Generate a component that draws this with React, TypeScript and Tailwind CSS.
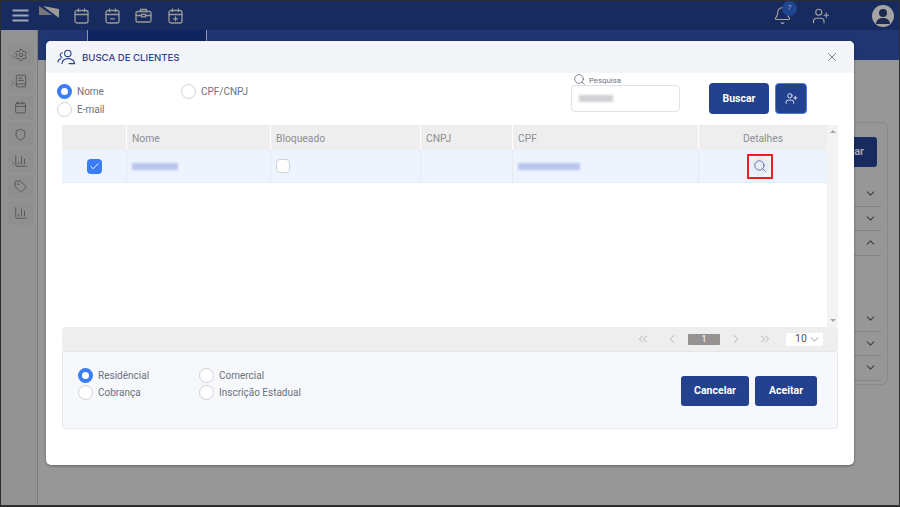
import { Bell, Calendar, Check, ChevronDown, ChevronLeft, ChevronRight, ChevronUp, ChevronsLeft, ChevronsRight, BookText, ChartColumn, Search, Settings, Shield, Tag, UserPlus, X } from "lucide-react";
import type { ReactNode } from "react";

function Radio({ label, on, h = "h-[17px]" }: { label: string; on?: boolean; h?: string }) {
  return (
    <div className={`flex items-center gap-[5px] ${h}`}>
      {on ? (
        <span className="w-[15px] h-[15px] rounded-full border-[4px] border-[#3b7cf5] bg-white shrink-0" />
      ) : (
        <span className="w-[15px] h-[15px] rounded-full border-[1.5px] border-[#ced2d8] bg-white shrink-0" />
      )}
      <span className="text-[10px] text-[#6b7280] whitespace-nowrap">{label}</span>
    </div>
  );
}

function Blur({ w, c = "#b9c5ee" }: { w: string; c?: string }) {
  return <span className={`block h-[7px] blur-[1px] ${w}`} style={{ backgroundColor: c }} />;
}

function Side({ children, arrow }: { children: ReactNode; arrow?: boolean }) {
  return (
    <div className="relative w-[26px] h-[24px] bg-[#8f8f8f] rounded-[2px] flex items-center justify-center text-[#474747]">
      {arrow && <ChevronRight size={6} strokeWidth={2} className="absolute left-[2px] top-[11px]" />}
      {children}
    </div>
  );
}

function CalIcon({ mark }: { mark?: "minus" | "plus" }) {
  return (
    <svg width="15" height="16" viewBox="0 0 15 16" fill="none" stroke="#9a9a94" strokeWidth="1.3" strokeLinecap="round">
      <rect x="1" y="2.5" width="13" height="12.5" rx="2" />
      <path d="M1 6.5H14M4.5 1V3.5M10.5 1V3.5" />
      {mark === "minus" && <path d="M5.5 10.8H9.5" />}
      {mark === "plus" && <path d="M5.5 10.8H9.5M7.5 8.8V12.8" />}
    </svg>
  );
}

function CaseIcon() {
  return (
    <svg width="17" height="15" viewBox="0 0 17 15" fill="none" stroke="#9a9a94" strokeWidth="1.3" strokeLinecap="round">
      <rect x="1" y="3.5" width="15" height="10.5" rx="1.5" />
      <path d="M5.5 3.5V1.5H11.5V3.5M1 7.5H6.5M10.5 7.5H16" />
      <rect x="6.5" y="6.3" width="4" height="2.5" />
    </svg>
  );
}

function PeopleIcon() {
  return (
    <svg width="19" height="16" viewBox="0 0 19 16" fill="none" stroke="#27408f" strokeWidth="1.1" strokeLinecap="round">
      <circle cx="10.8" cy="4.4" r="3.2" />
      <path d="M5 14.6C5 11.6 7.4 9.6 10.8 9.6C14.2 9.6 17.6 11.6 17.6 14.6H12" />
      <path d="M5.4 3.8C4 4 3 5.2 3.3 6.6C3.5 7.5 4.2 8.1 5 8.4M1 13C1 11.2 2.2 10 4 9.7" />
    </svg>
  );
}

function Head({ className, children }: { className: string; children?: ReactNode }) {
  return <div className={`flex items-center pt-[2px] border-r border-white h-full text-[10.3px] text-[#8b8f96] ${className}`}>{children}</div>;
}

function Cell({ className, children }: { className: string; children?: ReactNode }) {
  return <div className={`flex items-center border-r border-[#e4e9f2] h-full ${className}`}>{children}</div>;
}

function BgRow({ up }: { up?: boolean }) {
  return (
    <div className="h-[24.5px] border-b border-[#858585] flex items-center justify-end pr-[4px] text-[#404040]">
      {up ? <ChevronUp size={13} /> : <ChevronDown size={13} />}
    </div>
  );
}

const btn = "bg-[#23418f] text-white text-[10.5px] font-['Roboto',sans-serif] font-bold";

export default function App() {
  return (
    <div className="relative w-[900px] h-[507px] overflow-hidden bg-[#979797] border-t border-l border-b-2 border-r border-[#2e2e2e] font-['Roboto',sans-serif]">
      {/* Top bar */}
      <header className="h-[29px] bg-[#172b5f] flex items-center pl-[11px]">
        <svg width="17" height="13" viewBox="0 0 17 13" fill="none" stroke="#a0a8b8" strokeWidth="1.8">
          <path d="M0.5 1.5H16.5M0.5 6.5H16.5M0.5 11.5H16.5" />
        </svg>
        <svg width="20" height="12" viewBox="0 0 20 12" className="ml-[10px] -mt-[7px]">
          <polygon points="0,0 0,9 13,9" fill="#78787c" />
          <polygon points="4,0 20,3 20,12" fill="#9a9a98" />
        </svg>
        <div className="flex items-center ml-[15px]">
          <CalIcon />
          <span className="ml-[16px] flex"><CalIcon mark="minus" /></span>
          <span className="ml-[15px] flex"><CaseIcon /></span>
          <span className="ml-[16px] flex"><CalIcon mark="plus" /></span>
        </div>
        <div className="ml-auto flex items-center pr-[5px]">
          <div className="relative mr-[20px]">
            <Bell size={19} strokeWidth={1.4} className="text-[#a5a5a0]" />
            <span className="absolute -top-[5px] left-[9px] w-[15px] h-[15px] rounded-full bg-[#1f4490] text-[#9aa6c0] text-[7px] flex items-center justify-center">7</span>
          </div>
          <UserPlus size={18} strokeWidth={1.5} className="text-[#a5a5a0] mr-[42px]" />
          <span className="relative w-[22px] h-[22px] rounded-full bg-[#a4a4a4] overflow-hidden flex justify-center">
            <span className="absolute top-[4px] w-[8px] h-[8px] rounded-full bg-[#1d2a4f]" />
            <span className="absolute top-[13px] w-[14px] h-[6px] rounded-t-full bg-[#1d2a4f]" />
          </span>
        </div>
      </header>

      <div className="flex h-[475px]">
        {/* Sidebar */}
        <aside className="w-[37px] bg-[#939393] border-r border-[#7d7d7d] flex flex-col items-center gap-[2.4px] pt-[13px] pl-[3px] shrink-0">
          <Side arrow><Settings size={14} strokeWidth={1.3} /></Side>
          <Side arrow><BookText size={14} strokeWidth={1.3} /></Side>
          <Side><Calendar size={13} strokeWidth={1.4} /></Side>
          <Side><Shield size={13} strokeWidth={1.4} /></Side>
          <Side arrow><ChartColumn size={14} strokeWidth={1.3} /></Side>
          <Side><Tag size={13} strokeWidth={1.4} /></Side>
          <Side><ChartColumn size={14} strokeWidth={1.3} /></Side>
        </aside>

        {/* Dimmed page */}
        <main className="flex-1 min-w-0">
          <div className="h-[30px] bg-[#1f3672] flex pl-[49px]">
            <div className="w-[120px] h-full bg-[#0f2560] border-x border-[#8d97b0]" />
          </div>
          <div className="flex justify-end pt-[62px] pr-[11px]">
            <div className="w-[160px] h-[263px] border border-[#8b8b8b] rounded-[6px] pt-[14px] pr-[6px]">
              <div className="flex justify-end pr-[4px]">
                <span className="w-[60px] h-[30px] bg-[#172b5f] rounded-[3px] text-[#a8abb3] text-[11px] font-semibold flex items-center justify-end pr-[13px]">ar</span>
              </div>
              <div className="mt-[15px] flex flex-col">
                <BgRow />
                <BgRow />
                <BgRow up />
                <div className="h-[51.5px]" />
                <BgRow />
                <BgRow />
                <BgRow />
              </div>
            </div>
          </div>
        </main>
      </div>

      {/* Modal */}
      <section className="absolute left-[45px] top-[40px] w-[808px] h-[424px] bg-white rounded-[5px] shadow-[0_1px_3px_rgba(0,0,0,0.35)] flex flex-col overflow-hidden">
        <div className="h-[32px] bg-[#f4f5f8] flex items-center pl-[11px] pr-[15px] shrink-0">
          <PeopleIcon />
          <h1 className="ml-[6px] pt-[2px] font-['Inter',sans-serif] font-medium text-[9.6px] text-[#2b4390]">BUSCA DE CLIENTES</h1>
          <X size={14} strokeWidth={1.4} className="ml-auto text-[#5f6672]" />
        </div>

        <div className="h-[52px] flex pl-[11px] pr-[47px] shrink-0">
          <div className="pt-[9px] flex flex-col w-[124px]">
            <Radio label="Nome" on h="h-[18px]" />
            <Radio label="E-mail" h="h-[18px]" />
          </div>
          <div className="pt-[9px]">
            <Radio label="CPF/CNPJ" h="h-[18px]" />
          </div>
          <div className="ml-auto flex">
            <div className="w-[109px]">
              <div className="flex items-center gap-[3px] h-[12px] pl-[2px]">
                <Search size={13} strokeWidth={1.3} className="text-[#555b66]" />
                <span className="text-[7.8px] text-[#6b7280] mt-[3px]">Pesquisa</span>
              </div>
              <div className="h-[27px] w-[109px] border border-[#dfe2e6] rounded-[4px] flex items-center pl-[7px]">
                <Blur w="w-[34px]" c="#d0d1d4" />
              </div>
            </div>
            <button className={`ml-[29px] mt-[10px] w-[60px] h-[31px] rounded-[4px] ${btn}`}>Buscar</button>
            <button className="ml-[6px] mt-[10px] w-[32px] h-[31px] bg-[#23418f] rounded-[4px] border border-[#4a7fe0] text-white flex items-center justify-center">
              <UserPlus size={13} strokeWidth={1.5} />
            </button>
          </div>
        </div>

        <div className="pl-[16px] pr-[16px] flex flex-col">
          <div className="flex h-[202px]">
            <div className="w-[765px]">
              <div className="h-[25px] bg-[#eeeeee] flex">
                <Head className="w-[65px]" />
                <Head className="w-[144px] pl-[5px]">Nome</Head>
                <Head className="w-[150px] pl-[5px]">Bloqueado</Head>
                <Head className="w-[92px] pl-[5px]">CNPJ</Head>
                <Head className="w-[186px] pl-[5px]">CPF</Head>
                <Head className="flex-1 justify-center border-r-0">Detalhes</Head>
              </div>
              <div className="h-[33px] bg-[#eef4fe] border-b border-[#e6ebf4] flex">
                <Cell className="w-[65px] justify-center">
                  <span className="w-[15px] h-[15px] bg-[#3b7cf5] rounded-[4px] flex items-center justify-center text-white">
                    <Check size={11} strokeWidth={2} />
                  </span>
                </Cell>
                <Cell className="w-[144px] pl-[5px]"><Blur w="w-[46px]" /></Cell>
                <Cell className="w-[150px] pl-[5px]">
                  <span className="w-[14px] h-[14px] bg-white border border-[#d0d3d8] rounded-[4px]" />
                </Cell>
                <Cell className="w-[92px]" />
                <Cell className="w-[186px] pl-[5px]"><Blur w="w-[62px]" /></Cell>
                <div className="flex-1 flex items-center justify-center pr-[6px]">
                  <span className="w-[26px] h-[25px] border-2 border-[#ee1c25] flex items-center justify-center">
                    <span className="w-[20px] h-[20px] rounded-full bg-[#e9ecf2] flex items-center justify-center">
                      <Search size={14} strokeWidth={1.3} className="text-[#40549a]" />
                    </span>
                  </span>
                </div>
              </div>
            </div>
            <div className="w-[11px] bg-[#f3f3f3] flex flex-col justify-between items-center py-[5px]">
              <span className="w-0 h-0 border-x-[3px] border-x-transparent border-b-[3px] border-b-[#a5a5a5]" />
              <span className="w-0 h-0 border-x-[3px] border-x-transparent border-t-[3px] border-t-[#a5a5a5]" />
            </div>
          </div>

          <div className="h-[24px] bg-[#eeeeee] rounded-t-[3px] flex items-center justify-end pr-[15px] text-[#a3a3a3]">
            <ChevronsLeft size={14} strokeWidth={1.3} />
            <ChevronLeft size={14} strokeWidth={1.3} className="ml-[15px]" />
            <span className="ml-[9px] w-[32px] h-[11px] bg-[#969292] rounded-[1px] text-white text-[9.5px] flex items-center justify-center">1</span>
            <ChevronRight size={14} strokeWidth={1.3} className="ml-[9px]" />
            <ChevronsRight size={14} strokeWidth={1.3} className="ml-[15px]" />
            <span className="ml-[14px] w-[37px] h-[13px] bg-white text-[#555] text-[10.5px] flex items-center pl-[9px]">
              10<ChevronDown size={13} strokeWidth={1.2} className="ml-[1px] text-[#666]" />
            </span>
          </div>

          <div className="h-[78px] bg-[#f6f8fb] border border-[#e4e7ec] rounded-[3px] flex pl-[15px] pr-[20px]">
            <div className="pt-[15px] w-[121px] flex flex-col">
              <Radio label="Residêncial" on />
              <Radio label="Cobrança" />
            </div>
            <div className="pt-[15px] flex flex-col">
              <Radio label="Comercial" />
              <Radio label="Inscrição Estadual" />
            </div>
            <div className="ml-auto flex gap-[6px] pt-[24px]">
              <button className={`w-[68px] h-[30px] rounded-[3px] ${btn}`}>Cancelar</button>
              <button className={`w-[62px] h-[30px] rounded-[3px] ${btn}`}>Aceitar</button>
            </div>
          </div>
        </div>
      </section>
    </div>
  );
}
